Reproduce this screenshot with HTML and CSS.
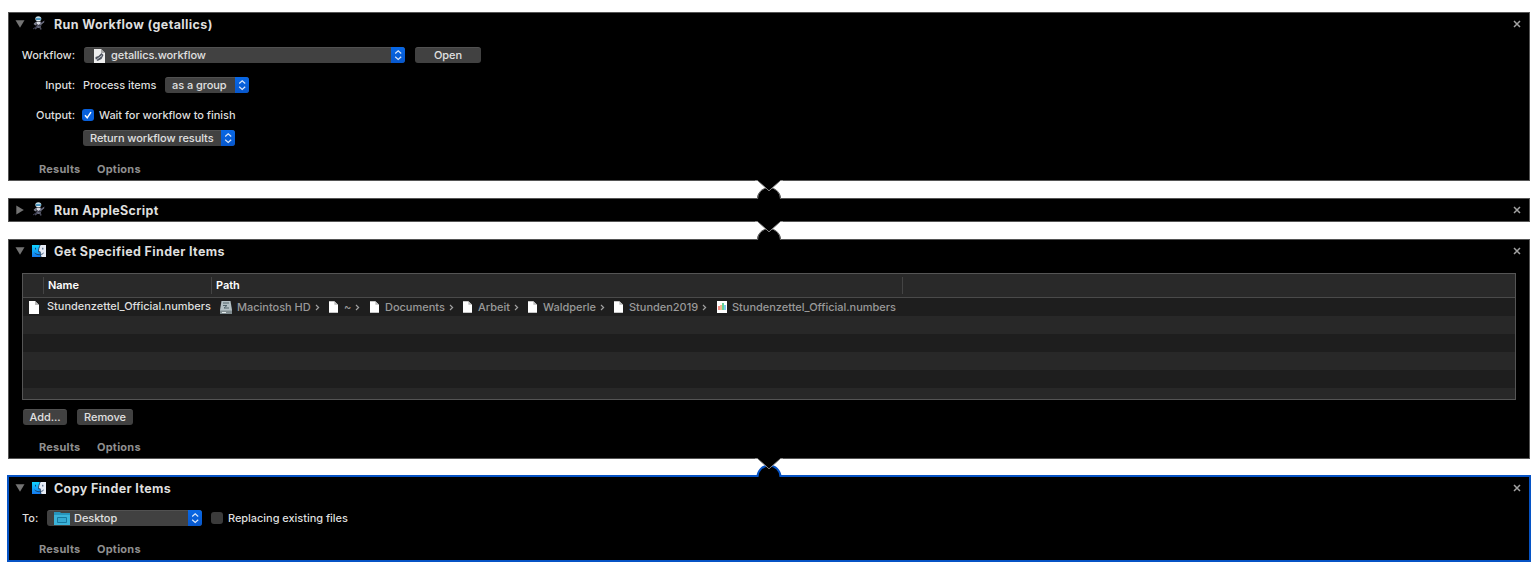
FILE: index.html
```html
<!DOCTYPE html>
<html lang="en">
<head>
<meta charset="utf-8">
<title>Workflow</title>
<link rel="stylesheet" href="styles.css">
</head>
<body>
<svg class="defs" width="0" height="0">
  <defs>
    <linearGradient id="sky" x1="0" y1="0" x2="0" y2="1"><stop offset="0" stop-color="#11d4ff"/><stop offset="1" stop-color="#1479f0"/></linearGradient>
    <symbol id="robot" viewBox="0 0 14 16">
      <path d="M4 6.500L2.500 8l1.500 1M9 8l3-2.500" stroke="#8c8fa0" stroke-width="1.200" fill="none"/>
      <path d="M4 5.500h5l.5 3.500-1.500 3H5z" fill="#6a6d7e"/>
      <path d="M5.500 11L3 13M8 11l1 2.500" stroke="#4a4c5c" stroke-width="1.600" fill="none"/>
      <path d="M4.500 6h3.500l1 2-2 1.500-2-.5z" fill="#d8dbe2"/>
      <path d="M5 8.500l2 1.500 2-1" stroke="#25252f" fill="none"/>
      <ellipse cx="6.300" cy="2.800" rx="3" ry="2.500" fill="#c4dce6"/>
      <path d="M4 2.300h4.800v1.500H4z" fill="#2380b5"/>
      <path d="M5 4.200h3v1H5z" fill="#f0f2f4"/>
      <path d="M1 13L12.500 5" stroke="#50506a" stroke-width=".8"/>
    </symbol>
    <symbol id="finder" viewBox="0 0 14 12">
      <path d="M0 0h14v12H0z" fill="#e6ebf5"/>
      <path d="M0 0h8.200C7 2.500 6.500 4.500 6.500 6.800h1.700c0 2 .2 3.600.8 5.200H0z" fill="url(#sky)"/>
      <path d="M8.200 0C7 2.500 6.500 4.500 6.500 6.800h1.700c0 2 .2 3.600.8 5.200M3.500 2.800v1.700M10.800 2.800v1.700M2.700 8c2.400 2.300 6.500 2.300 8.900 0" fill="none" stroke="#173a60" stroke-width=".9"/>
    </symbol>
    <symbol id="file" viewBox="0 0 10 13"><path d="M0 0h6l4 4v9H0z" fill="#fff"/><path d="M6 0v4h4z" fill="#bbb"/></symbol>
    <symbol id="arrows" viewBox="0 0 14 16"><path d="M4.200 6.500L7.200 3.800l3 2.700M4.200 9.700l3 2.700 3-2.700" fill="none" stroke="#dbe8fb" stroke-width="1.200"/></symbol>
    <symbol id="close" viewBox="0 0 8 8"><path d="M1 1l6 6M7 1L1 7" stroke="#a2a2a2" stroke-width="1.500"/></symbol>
    <symbol id="down" viewBox="0 0 10 8"><path d="M.5 .3h9L5 7.800z" fill="#737373"/></symbol>
    <symbol id="right" viewBox="0 0 8 10"><path d="M.3 .5v9L7.800 5z" fill="#737373"/></symbol>
    <symbol id="chev" viewBox="0 0 5 7"><path d="M1 1l2.600 2.500L1 6" fill="none" stroke="#a0a0a0" stroke-width="1.200"/></symbol>
    <symbol id="joint" viewBox="0 0 28 20">
      <path d="M2 19.500A12 12 0 0 1 26 19.500z" fill="#000"/>
      <path class="dome" d="M2.500 19A11.500 11.500 0 0 1 25.500 19" fill="none"/>
      <path d="M0 0h28v.5h-2.500L14 10.800 2.500 .5H0z" fill="#000"/>
      <path d="M0 .5h2.500L14 10.800 25.500 .5H28" fill="none" stroke="#888"/>
      <path d="M3 0h22L14 9.800z" fill="#000"/>
    </symbol>
  </defs>
</svg>

<main class="workflow">
  <section class="action action-run">
    <header class="head">
      <svg class="tri"><use href="#down"/></svg><svg class="robot"><use href="#robot"/></svg>
      <h2 class="title">Run Workflow (getallics)</h2><svg class="close"><use href="#close"/></svg>
    </header>
    <div class="row row-workflow">
      <span class="label">Workflow:</span>
      <div class="select select-wide">
        <svg class="doc" viewBox="0 0 11 14"><path d="M0 0h7l4 4v10H0z" fill="#eee"/><path d="M7 0v4h4z" fill="#aaa"/><path d="M1.500 8l3-1 3-3 2 2-2 4-4 2-2-2z" fill="#50555f"/><path d="M2 11l6-4.500" stroke="#c3c7cf"/></svg>
        <span>getallics.workflow</span><svg class="arrows"><use href="#arrows"/></svg>
      </div>
      <button class="button b-open">Open</button>
    </div>
    <div class="row row-input">
      <span class="label">Input:</span><span class="process">Process items</span>
      <div class="select select-group"><span>as a group</span><svg class="arrows"><use href="#arrows"/></svg></div>
    </div>
    <div class="row row-output">
      <span class="label">Output:</span>
      <svg class="check checked" viewBox="0 0 12 12"><path d="M3 6.300l2.200 2.500L9 3.200" fill="none" stroke="#fff" stroke-width="1.500"/></svg>
      <span>Wait for workflow to finish</span>
    </div>
    <div class="row row-return">
      <div class="select select-return"><span>Return workflow results</span><svg class="arrows"><use href="#arrows"/></svg></div>
    </div>
    <footer class="foot"><span class="results">Results</span><span>Options</span></footer>
  </section>

  <section class="action action-script">
    <svg class="joint"><use href="#joint"/></svg>
    <header class="head">
      <svg class="tri tri-right"><use href="#right"/></svg><svg class="robot"><use href="#robot"/></svg>
      <h2 class="title">Run AppleScript</h2><svg class="close"><use href="#close"/></svg>
    </header>
  </section>

  <section class="action action-get">
    <svg class="joint"><use href="#joint"/></svg>
    <header class="head">
      <svg class="tri"><use href="#down"/></svg><svg class="finder"><use href="#finder"/></svg>
      <h2 class="title">Get Specified Finder Items</h2><svg class="close"><use href="#close"/></svg>
    </header>
    <div class="table">
      <div class="thead"><span class="th th-icon"></span><span class="th th-name">Name</span><span class="th th-path">Path</span></div>
      <div class="tbody">
        <div class="item">
          <svg class="file-main"><use href="#file"/></svg><span class="name">Stundenzettel_Official.numbers</span>
          <div class="path">
            <div class="crumb c-hd"><svg class="disk" viewBox="0 0 12 13"><path d="M1.500 0h9L12 9v4H0V9z" fill="#b3c0c4"/><path d="M3 2h6M3 4.500h4l-3 2.500h5" fill="none" stroke="#52646b"/><path d="M0 9.500h12V13H0z" fill="#808c90"/><path d="M2 11.500h4" stroke="#e5eced"/></svg><span>Macintosh HD</span><svg class="chev"><use href="#chev"/></svg></div>
            <div class="crumb c-home"><svg class="file"><use href="#file"/></svg><span>~</span><svg class="chev"><use href="#chev"/></svg></div>
            <div class="crumb c-docs"><svg class="file"><use href="#file"/></svg><span>Documents</span><svg class="chev"><use href="#chev"/></svg></div>
            <div class="crumb c-arbeit"><svg class="file"><use href="#file"/></svg><span>Arbeit</span><svg class="chev"><use href="#chev"/></svg></div>
            <div class="crumb c-wald"><svg class="file"><use href="#file"/></svg><span>Waldperle</span><svg class="chev"><use href="#chev"/></svg></div>
            <div class="crumb c-stunden"><svg class="file"><use href="#file"/></svg><span>Stunden2019</span><svg class="chev"><use href="#chev"/></svg></div>
            <div class="crumb c-numbers"><svg class="file numbers" viewBox="0 0 10 12"><path d="M0 0h10v12H0z" fill="#fff"/><path d="M2 5v4" stroke="#ef6a5d" stroke-width="1.500"/><path d="M4 4v5" stroke="#f2a06b" stroke-width="1.500"/><path d="M6 2v7" stroke="#35c472" stroke-width="1.500"/><path d="M8 4v5" stroke="#55b7e8" stroke-width="1.500"/></svg><span>Stundenzettel_Official.numbers</span></div>
          </div>
        </div>
      </div>
    </div>
    <div class="row row-buttons"><button class="button b-add">Add...</button><button class="button b-remove">Remove</button></div>
    <footer class="foot"><span class="results">Results</span><span>Options</span></footer>
  </section>

  <section class="action action-copy">
    <svg class="joint"><use href="#joint"/></svg>
    <header class="head">
      <svg class="tri"><use href="#down"/></svg><svg class="finder"><use href="#finder"/></svg>
      <h2 class="title">Copy Finder Items</h2><svg class="close"><use href="#close"/></svg>
    </header>
    <div class="row row-to">
      <span class="t-to">To:</span>
      <div class="select select-desktop">
        <svg class="folder" viewBox="0 0 16 13"><path d="M0 0h6l1 1h9v12H0z" fill="#2795bd"/><path d="M0 3h16v10H0z" fill="#3cb3d9"/><path d="M3.500 5.500h9v5h-9z" fill="#35a9d2" stroke="#16789f"/></svg>
        <span>Desktop</span><svg class="arrows"><use href="#arrows"/></svg>
      </div>
      <span class="check"></span><span class="t-replace">Replacing existing files</span>
    </div>
    <footer class="foot"><span class="results">Results</span><span>Options</span></footer>
  </section>
</main>
</body>
</html>
```
FILE: styles.css
```css
* { box-sizing: border-box; }
body { margin: 0; background: #fff; color: #dedede; font: 500 11px/16px Inter, "Liberation Sans", sans-serif; letter-spacing: -.04px; white-space: nowrap; }
svg { display: block; flex: none; }
.defs { position: absolute; }
.workflow { display: flex; flex-direction: column; gap: 17px; padding: 12px 8px 0; }
.action { position: relative; background: #000; border: 1px solid #555; height: 169px; }
.action-script { height: 24px; }
.action-get { height: 220px; }
.action-copy { height: 87px; margin: -1px -1px 0; border: 2px solid #0653c5; }
.joint { position: absolute; left: 746px; top: -19px; width: 28px; height: 20px; --dome: #777; }
.dome { stroke: var(--dome); stroke-width: var(--dome-width, 1); }
.action-copy .joint { --dome: #0653c5; --dome-width: 2; }

.head { display: flex; align-items: center; height: 22px; padding: 0 8px 0 6px; }
.tri { width: 10px; height: 8px; margin-bottom: 1px; }
.action-get .tri, .action-copy .tri { margin-bottom: 1px; }
.tri-right { width: 8px; height: 10px; margin: 0 1px 1px; }
.robot { width: 14px; height: 16px; margin-left: 7px; }
.finder { width: 14px; height: 12px; margin-left: 7px; }
.title { margin: 0 auto 0 8px; padding-top: 2px; font-size: 12.5px; font-weight: 700; line-height: 22px; letter-spacing: .37px; }
.close { width: 8px; height: 8px; }

.row { display: flex; align-items: center; height: 16px; }
.label { width: 66px; text-align: right; }
.row-workflow { margin-top: 12px; }
.row-input, .row-output { margin-top: 14px; }
.row-return { margin-top: 7px; padding-left: 74px; }
.select, .button { display: flex; align-items: center; height: 16px; border: 0; border-top: 1px solid #515151; border-radius: 3px; background: #414141; color: #e0e0e0; font: 500 11px/15px Inter, "Liberation Sans", sans-serif; letter-spacing: -.06px; padding: 0; }
.arrows { width: 14px; height: 16px; margin: -1px 0 0 auto; border-radius: 0 3px 3px 0; background: linear-gradient(#0868e6, #0757cc); }
.button { justify-content: center; }
.select-wide { width: 321px; margin-left: 9px; padding-left: 10px; }
.doc { width: 11px; height: 14px; margin-right: 6px; }
.b-open { width: 66px; margin-left: 10px; }
.process { width: 82px; margin-left: 8px; }
.select-group { width: 84px; padding-left: 7px; }
.check { width: 12px; height: 12px; border-radius: 3px; background: #3b3b3b; }
.checked { margin: 0 5px 0 7px; background: #0860dc; }
.select-return { width: 152px; padding-left: 7px; }
.foot { display: flex; margin: 15px 0 0 30px; color: #8f8f8f; font-weight: 700; letter-spacing: .23px; }
.results { width: 58px; }

.table { height: 127px; margin: 11px 13px 0; border: 1px solid #555; background: #1e1e1e; }
.thead { display: flex; align-items: center; height: 24px; border-bottom: 1px solid #4a4a4a; background: #292929; color: #fff; font-weight: 600; }
.th { height: 17px; border-right: 1px solid #444; line-height: 16px; padding-left: 4px; }
.th-icon { width: 21px; }
.th-name { width: 168px; }
.th-path { width: 691px; }
.tbody { height: 101px; background: repeating-linear-gradient(#1e1e1e 0 18px, #282828 18px 36px); }
.item { display: flex; align-items: center; height: 18px; padding-left: 6px; }
.file-main { width: 10px; height: 13px; margin-top: 1px; }
.name { width: 173px; margin: -2px 0 0 8px; letter-spacing: -.02px; }
.path { display: flex; color: #999; letter-spacing: -.02px; }
.crumb { display: flex; align-items: center; height: 18px; }
.disk { width: 12px; height: 13px; margin-right: 5px; }
.file { width: 9px; height: 12px; margin: 0 6px 0 1px; }
.numbers { width: 10px; margin-right: 5px; }
.chev { width: 5px; height: 7px; margin: 1px 0 0 4px; }
.c-hd { width: 108px; }
.c-home { width: 41px; }
.c-docs { width: 93px; }
.c-arbeit { width: 65px; }
.c-wald { width: 86px; }
.c-stunden { width: 103px; }
.row-buttons { gap: 10px; margin-top: 9px; padding-left: 14px; }
.b-add { width: 44px; }
.b-remove { width: 56px; }
.action-get .foot { margin-top: 14px; }

.row-to { margin-top: 11px; padding-left: 13px; }
.t-to { width: 25px; }
.select-desktop { width: 155px; margin-right: 9px; padding-left: 7px; }
.folder { width: 16px; height: 13px; margin-right: 4px; }
.t-replace { margin-left: 5px; }
```
